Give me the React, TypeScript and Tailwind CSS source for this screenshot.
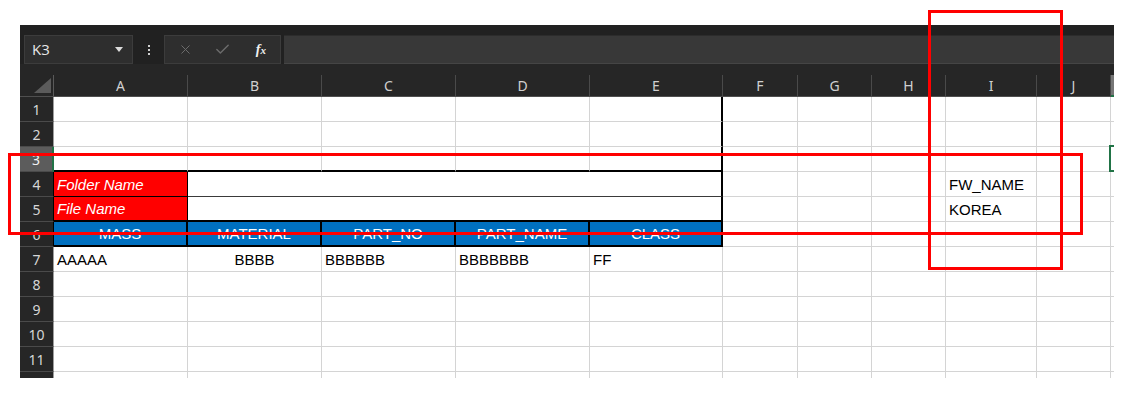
import React from "react";
import { X, Check } from "lucide-react";

const COLS = ["A", "B", "C", "D", "E", "F", "G", "H", "I", "J", "K"];
const GRID =
  "grid grid-cols-[34px_134px_134px_134px_134px_133px_75px_74px_74px_91px_74px_3px]";

type CellDef = { text?: string; span4?: boolean; cls: string; sel?: boolean };

const DEF = "border-r border-r-[#d4d4d4] border-b border-b-[#d4d4d4] bg-white text-black";

function rowCells(r: number): CellDef[] {
  const cells: CellDef[] = [];
  for (let c = 0; c < 11; c++) {
    cells.push({ cls: DEF });
  }
  if (r === 1 || r === 2) {
    cells[4] = { cls: "border-r-2 border-r-black border-b border-b-[#d4d4d4] bg-white text-black" };
  }
  if (r === 3) {
    for (let c = 0; c < 4; c++)
      cells[c] = { cls: "border-r border-r-[#d4d4d4] border-b-2 border-b-black bg-white text-black" };
    cells[4] = { cls: "border-r-2 border-r-black border-b-2 border-b-black bg-white text-black" };
    cells[10] = { cls: DEF, sel: true };
  }
  if (r === 4 || r === 5) {
    const rest = cells.slice(5);
    const a: CellDef =
      r === 4
        ? {
            text: "Folder Name",
            cls: "border-r border-r-black border-b border-b-black bg-[#ff0000] text-white italic",
          }
        : {
            text: "File Name",
            cls: "border-r border-r-black border-b-2 border-b-black bg-[#ff0000] text-white italic",
          };
    const b: CellDef =
      r === 4
        ? { span4: true, cls: "border-r-2 border-r-black border-b border-b-[#3a3a3a] bg-white text-black" }
        : { span4: true, cls: "border-r-2 border-r-black border-b-2 border-b-black bg-white text-black" };
    rest[3] = { cls: DEF, text: r === 4 ? "FW_NAME" : "KOREA" };
    return [a, b, ...rest];
  }
  if (r === 6) {
    const names = ["MASS", "MATERIAL", "PART_NO", "PART_NAME", "CLASS"];
    names.forEach((n, i) => {
      cells[i] = {
        text: n,
        cls: "border-r-2 border-r-black border-b-2 border-b-black bg-[#0070c0] text-white justify-center",
      };
    });
  }
  if (r === 7) {
    cells[0] = { cls: DEF, text: "AAAAA" };
    cells[1] = { cls: DEF + " justify-center", text: "BBBB" };
    cells[2] = { cls: DEF, text: "BBBBBB" };
    cells[3] = { cls: DEF, text: "BBBBBBB" };
    cells[4] = { cls: DEF, text: "FF" };
  }
  return cells;
}

function rowHeaderCls(r: number) {
  if (r === 3) return "bg-[#5c5c5c] text-[#f2f2f2] border-r-2 border-r-[#217346] border-b border-b-[#4a4a4a]";
  if (r >= 4 && r <= 6) return "bg-[#262626] text-[#d6d6d6] border-r border-r-black border-b border-b-[#4a4a4a]";
  return "bg-[#262626] text-[#d6d6d6] border-r border-r-[#9e9e9e] border-b border-b-[#4a4a4a]";
}

export default function App() {
  const rows = [1, 2, 3, 4, 5, 6, 7, 8, 9, 10, 11, 12];
  return (
    <div className="relative w-[1134px] h-[413px] bg-white overflow-hidden pt-[25px] pl-[20px]">
      <div className="w-[1094px] h-[353px] bg-[#212121] flex flex-col overflow-hidden">
        {/* top band */}
        <div className="h-[10px] shrink-0" />
        {/* formula bar */}
        <div className="h-[29px] shrink-0 flex items-stretch pl-[4px]">
          <div className="w-[109px] bg-[#2e2e2e] border border-[#3c3c3c] flex items-center justify-between pl-[7px] pr-[9px]">
            <span className="font-['Open_Sans',sans-serif] text-[15px] text-[#e6e6e6] leading-none">K3</span>
            <svg width="8" height="5" viewBox="0 0 8 5">
              <polygon points="0,0 8,0 4,5" fill="#dcdcdc" />
            </svg>
          </div>
          <div className="w-[31px] flex flex-col items-center justify-center gap-[2px]">
            <div className="w-[2px] h-[2px] bg-[#cfcfcf]" />
            <div className="w-[2px] h-[2px] bg-[#cfcfcf]" />
            <div className="w-[2px] h-[2px] bg-[#cfcfcf]" />
          </div>
          <div className="w-[117px] bg-[#2e2e2e] border border-[#3c3c3c] flex items-center">
            <div className="w-[39px] flex justify-center pl-[2px]">
              <X size={15} strokeWidth={1.6} color="#6c6c6c" />
            </div>
            <div className="w-[39px] flex justify-center">
              <Check size={17} strokeWidth={2} color="#6c6c6c" />
            </div>
            <div className="w-[39px] flex justify-center">
              <span className="font-['Liberation_Serif',serif] italic font-bold text-[14px] text-[#f0f0f0] leading-none">
                f<span className="text-[11px]">x</span>
              </span>
            </div>
          </div>
          <div className="ml-[3px] flex-1 bg-[#383838] border-t border-b border-t-[#2c2c2c] border-b-[#454545]" />
        </div>
        {/* column headers */}
        <div className="h-[33px] shrink-0 bg-[#262626] pt-[11px]">
          <div className={GRID + " h-[22px] font-['Noto_Sans',sans-serif] text-[14px] text-[#d0d0d0]"}>
            <div className="relative border-r border-r-[#5a5a5a] border-b border-b-[#4f4f4f]">
              <svg className="absolute right-[2px] bottom-[3px]" width="17" height="15" viewBox="0 0 17 15">
                <polygon points="0,15 17,15 17,0" fill="#5b5b5b" />
              </svg>
            </div>
            {COLS.map((c) =>
              c === "K" ? (
                <div key={c} className="bg-[#767676] border-b-2 border-b-[#217346]" />
              ) : (
                <div
                  key={c}
                  className="flex items-center justify-center border-r border-r-[#4a4a4a] border-b border-b-[#4f4f4f] leading-none"
                >
                  {c}
                </div>
              )
            )}
          </div>
        </div>
        {/* sheet */}
        <div className={GRID + " bg-white"}>
          {rows.map((r) => (
            <React.Fragment key={r}>
              <div
                className={
                  "h-[25px] flex items-center justify-center pt-[2px] font-['Noto_Sans',sans-serif] text-[14px] leading-none " +
                  rowHeaderCls(r)
                }
              >
                {r < 12 ? r : ""}
              </div>
              {rowCells(r).map((cell, i) => (
                <div
                  key={i}
                  className={
                    "relative h-[25px] flex items-end pb-[2px] px-[3px] whitespace-nowrap font-['Liberation_Sans',Arial,sans-serif] text-[15px] leading-[18px] " +
                    (cell.span4 ? "col-span-4 " : "") +
                    cell.cls
                  }
                >
                  {cell.text}
                  {cell.sel && (
                    <div className="absolute left-[-2px] top-[-2px] bottom-[-1px] w-[10px] border-2 border-[#217346]" />
                  )}
                </div>
              ))}
            </React.Fragment>
          ))}
        </div>
      </div>

      {/* red annotation boxes */}
      <div className="absolute left-[928px] top-[10px] w-[135px] h-[260px] border-[3px] border-[#ff0000]" />
      <div className="absolute left-[8px] top-[153px] w-[1075px] h-[82px] border-[3px] border-[#ff0000]" />
    </div>
  );
}
